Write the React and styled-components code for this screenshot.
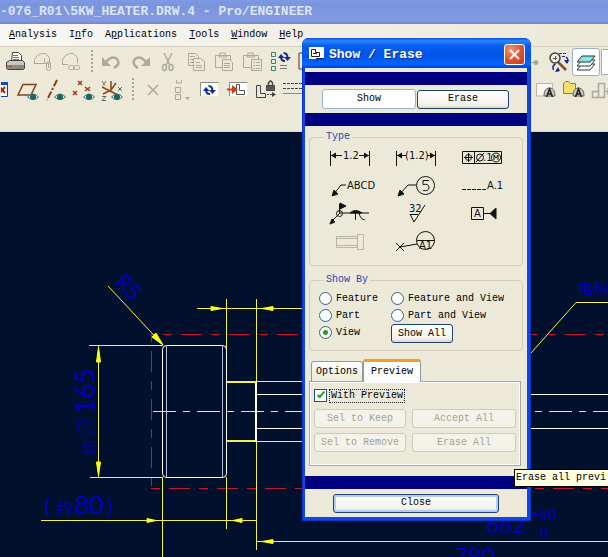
import React, { useState } from "react";
import styled, { createGlobalStyle, css } from "styled-components";

const GlobalStyle = createGlobalStyle`
  *, *::before, *::after { box-sizing: border-box; }
  html, body { margin: 0; overflow: hidden; }
  body, button, input, legend {
    font-family: "Liberation Mono", "Noto Sans CJK SC", monospace;
    font-size: 10px;
    line-height: 12px;
    color: #000;
  }
  button { padding: 0; }
`;

const Window = styled.main`
  position: relative;
  display: flex;
  flex-direction: column;
  height: 100vh;
  overflow: hidden;
  background: #ece9d8;
`;

const TitleBar = styled.header`
  height: 24px;
  display: flex;
  align-items: center;
  background: linear-gradient(#7d9be4, #7b94dd 20%, #829adf 85%, #7384d6);
`;

const WindowTitle = styled.h1`
  margin: 0;
  color: #dce6fa;
  font-size: 13px;
  line-height: 20px;
  font-weight: bold;
  white-space: nowrap;
`;

const MenuBar = styled.nav`
  display: flex;
  align-items: center;
  gap: 12px;
  height: 23px;
  padding-left: 9px;
  background: linear-gradient(90deg, #f8f7f3, #ece9d8);
  border-bottom: 1px solid #d5d1c2;
`;

const MenuItem = styled.button`
  border: 0;
  background: none;
`;

const Toolbars = styled.div`
  flex: none;
  height: 85px;
  padding-top: 1px;
  overflow: hidden;
  border-bottom: 1px solid #d5d5d0;
`;

const ToolRow = styled.div`
  display: flex;
  height: 28px;
`;

const ToolGroup = styled.div`
  display: flex;
  flex: none;
  width: ${(p) => (p.$lead ? "530px" : "auto")};
  padding-left: 1px;
  overflow: hidden;
`;

const ToolButton = styled.button`
  flex: none;
  display: flex;
  justify-content: ${(p) => (p.$clip ? "flex-end" : "center")};
  align-items: center;
  width: ${(p) => (p.$clip ? "13px" : "28px")};
  height: 28px;
  border: 0;
  background: none;
  overflow: hidden;
  ${(p) => p.$on && css`
    background: #fff;
    border: 1px solid #98b0d0;
    border-radius: 3px;
  `}
`;

const Glyph = styled.svg`
  flex: none;
  width: 28px;
  height: 28px;
  fill: none;
`;

const Grip = styled.span`
  flex: none;
  width: 13px;
  height: 24px;
  margin-top: 2px;
  background: repeating-linear-gradient(#a8a598 0 2px, transparent 2px 4px) 6px 0 / 2px 100% no-repeat;
`;

const Canvas = styled.section`
  flex: 1;
  min-height: 0;
  background: #00102d;
`;

const Sheet = styled.svg`
  display: block;
  width: 100%;
  height: 100%;
  fill: none;
  stroke-width: 1px;

  text {
    fill: #0000c4;
    font-family: Lato, "Noto Sans CJK SC", sans-serif;
    font-weight: 400;
  }
`;

const Dialog = styled.section`
  position: absolute;
  top: 38px;
  left: 302px;
  width: 229px;
  padding: 0 4px 4px 3px;
  border-radius: 7px 7px 0 0;
  background: #0a48e8;
  box-shadow: inset 1px 0 #0a35c8, inset -1px -1px #0a35c8;
`;

const DialogHeader = styled.header`
  display: flex;
  align-items: center;
  height: 30px;
  margin: 0 -4px 0 -3px;
  padding: 3px 6px 0 7px;
  border-radius: 7px 7px 0 0;
  background: linear-gradient(#0a50d8, #2b86ff 10%, #0a5cf0 25%, #0055e8 60%, #0664ff 88%, #0043c8);
`;

const DialogTitle = styled.h2`
  flex: 1;
  margin: 0 0 0 5px;
  color: #fff;
  font-size: 13px;
  line-height: 20px;
  font-weight: bold;
  text-shadow: 1px 1px #0a2f90;
`;

const AppIcon = styled.svg`
  width: 15px;
  height: 15px;
`;

const CloseBox = styled.button`
  display: grid;
  place-items: center;
  width: 21px;
  height: 21px;
  border: 1px solid #fff;
  border-radius: 3px;
  background: radial-gradient(circle at 30% 25%, #f0947a, #e05030 55%, #c83a18);
`;

const DialogBody = styled.div`
  padding-top: 4px;
  background: #ece9d8;
`;

const Stripe = styled.div`
  height: 13px;
  background: #000080;
`;

const PushButton = styled.button`
  height: ${(p) => (p.$active ? "20px" : "19px")};
  border: 1px solid #1c4270;
  border-radius: 3px;
  background: linear-gradient(#fff, #f3f2ea 80%, #dcd6c8);
  ${(p) => p.$active && css`
    background: #fff;
    border-color: #98b0d8;
  `}
  ${(p) => p.$default && css`
    box-shadow: inset 0 0 0 2px #b5cdf5;
  `}
  &:disabled {
    color: #a5a292;
    border-color: #cdcabc;
    background: #f4f3ea;
  }
`;

const ModeRow = styled.div`
  display: grid;
  grid-template-columns: 94px 92px;
  gap: 1px;
  align-items: center;
  height: 28px;
  padding-left: 17px;
`;

const Content = styled.div`
  padding: 5px 4px 10px;
`;

const Group = styled.fieldset`
  min-width: 0;
  margin: 0 0 8px;
  padding: ${(p) => (p.$tight ? "4px 9px 9px" : "1px 7px 9px")};
  border: 1px solid #d2cfbf;
  border-radius: 4px;
`;

const Legend = styled.legend`
  margin-left: ${(p) => (p.$tight ? "5px" : "7px")};
  padding: 0 2px;
  color: #1c48b0;
`;

const TypeGrid = styled.div`
  display: grid;
  grid-template-columns: repeat(3, 66px);
  grid-auto-rows: 28px;
`;

const TypeButton = styled.button`
  border: 0;
  background: none;
`;

const TypeGlyph = styled.svg`
  display: block;
  width: 66px;
  height: 28px;
  fill: none;
  stroke: #111;

  text {
    fill: #111;
    stroke: none;
    font-family: "DejaVu Sans", sans-serif;
    font-size: 10px;
  }
`;

const RadioGrid = styled.div`
  display: grid;
  grid-template-columns: 72px 1fr;
  grid-auto-rows: 17px;
`;

const RadioLabel = styled.label`
  display: flex;
  align-items: center;
  gap: 4px;
  white-space: nowrap;
`;

const Radio = styled.input`
  appearance: none;
  flex: none;
  width: 13px;
  height: 13px;
  margin: 0;
  border: 1px solid #3d6288;
  border-radius: 50%;
  background: #fbfbf8;
  &:checked {
    background: radial-gradient(circle, #2a9c2a 0 2px, #f6f8f2 3px);
  }
`;

const ShowAll = styled(PushButton)`
  width: 62px;
`;

const Tabs = styled.div`
  display: flex;
  align-items: flex-end;
  height: 23px;
  margin: 0 0 -1px 2px;
`;

const Tab = styled.button`
  position: relative;
  width: ${(p) => (p.$active ? "58px" : "52px")};
  height: ${(p) => (p.$active ? "23px" : "20px")};
  margin-bottom: ${(p) => (p.$active ? "0" : "1px")};
  border: 1px solid #919b9c;
  border-bottom: 0;
  border-radius: 3px 3px 0 0;
  background: linear-gradient(#fff, #ece9d8);
  ${(p) => p.$active && css`
    border-top: 3px solid #f0a020;
    background: #fcfcfa;
  `}
`;

const TabPanel = styled.div`
  width: 212px;
  height: 85px;
  padding: 7px 4px 0;
  border: 1px solid #a3a9ab;
  box-shadow: inset -1px -1px #fff, inset 1px 1px #fff;
`;

const CheckLabel = styled.label`
  display: flex;
  align-items: center;
  gap: 2px;
  height: 13px;
`;

const CheckText = styled.span`
  padding: 0 1px;
  border: 1px dotted #222;
`;

const Check = styled.input`
  appearance: none;
  width: 13px;
  height: 13px;
  margin: 0;
  border: 1px solid #1c5180;
  background: #fff;
  &:checked::after {
    content: "";
    display: block;
    width: 4px;
    height: 8px;
    margin: 0 0 0 4px;
    border: solid #21a121;
    border-width: 0 2px 2px 0;
    transform: rotate(42deg);
  }
`;

const ActionGrid = styled.div`
  display: grid;
  grid-template-columns: 92px 104px;
  gap: 5px 6px;
  padding-top: 7px;
`;

const Footer = styled.footer`
  display: flex;
  align-items: center;
  height: 28px;
  padding: 0 28px;
`;

const CloseButton = styled(PushButton)`
  flex: 1;
`;

const Tooltip = styled.div`
  position: absolute;
  top: 469px;
  left: 514px;
  min-width: 100px;
  padding: 2px 1px;
  border: 1px solid #000;
  background: #ffffe1;
  white-space: nowrap;
`;

const OFF = "#aba99c";
const BLUE = "#102c98";

const Eye = ({ x = 4, y = 1 }) => (
  <g transform={`translate(${x} ${y})`}>
    <path d="M9.500 20q5.500-6 11 0q-5.500 5-11 0" fill="#dfe8e0" stroke="#55746e" />
    <circle cx="15" cy="20" r="3" fill="#146860" />
  </g>
);

const Cycle = ({ x = 0, y = 0 }) => (
  <g transform={`translate(${x} ${y})`}>
    <path d="M3 5q0 4 4 4M9.500 6q0-5-4-5" stroke={BLUE} strokeWidth="2" />
    <path d="M0 6l3-4 3.500 4zM6 5h7l-3.500 4z" fill={BLUE} />
  </g>
);

const Stamp = ({ x = 0 }) => (
  <g transform={`translate(${x} 0)`}>
    <path d="M9 20q0-8 5.500-8t5.500 8z" fill="#c8c8c2" stroke="#666" />
    <path d="M11.500 21l3-8 3 8M12.500 18h4" stroke="#222" strokeWidth="1.500" />
  </g>
);

const icons = {
  print: (
    <g stroke="#444">
      <path d="M10.500 13.500l1-9h6l3 3v6" fill="#fff" />
      <path d="M12 7.500h5M12 9.500h6M12 11.500h6" stroke="#777" />
      <path d="M5.500 14.500l3-2h13l2 2v5h-18z" fill="#c8c6ba" />
      <path d="M6 17h17v4H6z" fill="#8c8a80" stroke="none" />
      <path d="M5.500 14.500v6l1 1h16l1-1v-6" />
      <path d="M8 18.500h3" stroke="#c33" />
    </g>
  ),
  attach: (
    <g stroke={OFF}>
      <path d="M5.500 15.500v-4l3-4 4-2h4l4 4v6h-5v-5M5 15.500h10" />
      <rect x="17.500" y="13.500" width="4" height="9" rx="2" />
      <path d="M19.500 16v4" />
    </g>
  ),
  link: (
    <g stroke={OFF}>
      <path d="M5.500 16.500v-5l3-4 4-2h4l4 4v6M5 16.500h6" />
      <rect x="11.500" y="17.500" width="6" height="4" rx="2" />
      <rect x="16.500" y="17.500" width="6" height="4" rx="2" />
    </g>
  ),
  undo: <g><path d="M8 14q6-7 11-3 4 5-3 9" stroke={OFF} strokeWidth="2.500" /><path d="M4 9v9h9z" fill={OFF} /></g>,
  redo: <g><path d="M20 14q-6-7-11-3-4 5 3 9" stroke={OFF} strokeWidth="2.500" /><path d="M24 9v9h-9z" fill={OFF} /></g>,
  cut: (
    <g stroke={OFF} strokeWidth="1.500">
      <path d="M10 5l6 12M18 5l-6 12" />
      <ellipse cx="10.500" cy="19.500" rx="2" ry="3" />
      <ellipse cx="17" cy="19.500" rx="2" ry="3" />
    </g>
  ),
  copy: (
    <g stroke={OFF}>
      <path d="M6.500 5.500h7l3 3v9h-10zM8 8.500h5M8 11.500h6M8 14.500h6" />
      <path d="M11.500 10.500h7l4 3v9h-11zM14 14.500h4M14 17.500h6M14 19.500h6" fill="#ece9d8" />
    </g>
  ),
  paste: (
    <g stroke={OFF}>
      <path d="M5.500 7.500h15v12h-15zM9 9l1-4h5l2 4z" />
      <path d="M12.500 11.500h7l3 3v8h-10zM14 15.500h6M14 17.500h6M14 19.500h6" fill="#ece9d8" />
    </g>
  ),
  pasteSpecial: (
    <g stroke={OFF}>
      <path d="M5.500 7.500h15v12h-15zM9 9l1-4h5l2 4z" />
      <path d="M13.500 11.500h10v11h-10z" fill="#ece9d8" />
      <path d="M15 14.500h2M15 17.500h2M15 20.500h2M18 14.500h4M18 17.500h4M18 20.500h4" />
    </g>
  ),
  regen: (
    <g>
      <path d="M5.500 4.500h4v4h-4zM5.500 11.500h4v4h-4zM5.500 18.500h4v4h-4z" fill="#d8f0e8" stroke="#3c8078" />
      <Cycle x={12} y={4} />
      <path d="M14 17.500h7M14 20.500h7" stroke="#777" />
    </g>
  ),
  find: <path d="M5 5h10v16H5z" stroke="#722" />,
  dot: <g><path d="M12 14.500h9" stroke={OFF} /><circle cx="20" cy="14.500" r="2.500" fill={OFF} /></g>,
  zoomView: (
    <g>
      <path d="M14 14l8 8" stroke="#80502c" strokeWidth="2.500" />
      <circle cx="11" cy="10" r="5" stroke="#444" strokeWidth="1.500" fill="#efeede" />
      <path d="M9 10.500h4M11.500 8v4" stroke="#555" />
      <path d="M15 5.500h8M18 8.500h4" stroke={BLUE} strokeDasharray="3 1" />
      <path d="M22 9q3 2 1 6M9.500 22q-2-4 2-6M12 22.500h3" stroke={BLUE} strokeWidth="1.500" />
      <path d="M20 12h5l-2 4zM11 24l5-1-2-4z" fill={BLUE} />
    </g>
  ),
  layers: (
    <g stroke="#333">
      <path d="M5 22h13l5-6H10z" fill="#fff" />
      <path d="M5 18h13l5-6H10z" fill="#fff" />
      <path d="M5 14h13l5-6H10z" fill="#84e6e8" />
    </g>
  ),
  panel: <path d="M1.500 1.500h26v25h-26z" fill="#fff" stroke="#98b0d0" />,
  boxX: (
    <g>
      <path d="M6.500 6.500h15v14h-15z" fill="#fff" stroke="#203a98" />
      <path d="M6 7.500h16" stroke="#1845c0" strokeWidth="3" />
      <path d="M14 11l5 6M19 11l-5 6" stroke="#922" strokeWidth="2" />
    </g>
  ),
  plane: <g><path d="M9 8.500h13L17 19H4z" stroke="#883f18" strokeWidth="1.500" /><Eye /></g>,
  axis: <g><path d="M15 4L5 24" stroke="#883f18" strokeWidth="2" strokeDasharray="7 2 2 2" /><Eye x={3} /></g>,
  points: (
    <g>
      <path d="M8 5l4 4M12 5l-4 4M3 15l4 4M7 15l-4 4M15 11l5 4M20 11l-5 4" stroke="#98401a" strokeWidth="1.500" />
      <Eye />
    </g>
  ),
  csys: (
    <g>
      <path d="M13 5v9L5 18M4 11l16 8M13 14l5-7" stroke="#98401a" strokeWidth="1.500" />
      <path d="M4 5l2 3 2-3M6 8v2M20 11l4 4M24 11l-4 4M4 20.500h4l-4 4h4" stroke="#666" />
      <Eye />
    </g>
  ),
  remove: <path d="M9 9l10 10M19 9L9 19" stroke={OFF} strokeWidth="1.500" />,
  order: (
    <g stroke={OFF}>
      <path d="M9.500 4v3h5V4M8.500 11.500h5v5h-5zM8.500 18.500h5v5h-5z" />
      <path d="M18 21h5l-2.500 3z" fill={OFF} stroke="none" />
    </g>
  ),
  refresh: <g><path d="M5.500 20V6.500h18" stroke="#8e8c80" /><path d="M6 7h17v13H6z" fill="#fff" /><Cycle x={8} y={9} /></g>,
  swap: (
    <g>
      <path d="M6.500 20V6.500h18" stroke="#8e8c80" />
      <path d="M7 7h17v13H7z" fill="#fff" />
      <path d="M13.500 8.500h3v6h5v4h-8z" stroke="#555" />
      <path d="M4 13.500h6" stroke="#d53a1c" strokeWidth="2" />
      <path d="M9 9l6 4.500-6 4.500z" fill="#d53a1c" />
    </g>
  ),
  lock: (
    <g stroke="#444">
      <path d="M5.500 9.500h4v8h5v4h-9z" />
      <path d="M15.500 9.500h8v5h-8z" fill="#555" />
      <path d="M17.500 9V7q2-4 4 0v2" strokeWidth="1.500" />
      <path d="M16 18.500h6" strokeDasharray="2 1" />
      <path d="M21 16l4 2.500-4 2.500z" fill="#444" stroke="none" />
    </g>
  ),
  lines: (
    <g stroke="#444">
      <path d="M4 7.500h22M4 12.500h22" strokeDasharray="3 1" />
      <path d="M4 17.500h22" stroke="#888" />
    </g>
  ),
  stampPage: <g><path d="M5.500 20V7.500h16V20z" fill="#f8f8f0" stroke="#b9b7ab" /><Stamp x={4} /></g>,
  stampFolder: <g><path d="M4.500 17.500v-10l2-2h3l2 2h5v10z" fill="#f7df70" stroke="#8e8042" /><Stamp x={5} /></g>,
  align: <path d="M5.500 15.500h6v6h-6zM11.500 7.500h6v14h-6zM18 15.500h8M21 12v7" stroke={OFF} strokeWidth="1.500" />,
};

const Tool = ({ name, ...rest }) => (
  <ToolButton type="button" aria-label={name} {...rest}>
    <Glyph viewBox="0 0 28 28">{icons[name]}</Glyph>
  </ToolButton>
);

const menus = [["", "A", "nalysis"], ["I", "n", "fo"], ["A", "p", "plications"], ["", "T", "ools"], ["", "W", "indow"], ["", "H", "elp"]];

const typeIcons = [
  ["Dimension", <g><path d="M13.500 7v15M52.500 7v15M14 11.500h11M42 11.500h10" /><path d="M14 11.500l5-3v6zM52 11.500l-5-3v6z" fill="#111" stroke="none" /><text x="26" y="15">1.2</text></g>],
  ["Reference dimension", <g><path d="M13.500 7v15M52.500 7v15M14 11.500h9M44 11.500h8" /><path d="M14 11.500l5-3v6zM52 11.500l-5-3v6z" fill="#111" stroke="none" /><text x="22" y="15">(1.2)</text></g>],
  ["Geometric tolerance", <g><path d="M13.500 7.500h39v12h-39zM25.500 7.500v12M15 13.500h9M19.500 9v9" /><circle cx="19.500" cy="13.500" r="3" /><circle cx="31" cy="13.500" r="3.500" /><path d="M27 18l8-9" /><text x="34" y="17">.1</text><circle cx="47" cy="13.500" r="4.500" /><path d="M45 16v-5l2 3 2-3v5" /></g>],
  ["Note", <g><path d="M17 22l7-9h5" /><path d="M15 24l2-6 4 4z" fill="#111" /><text x="30" y="17">ABCD</text></g>],
  ["Balloon", <g><path d="M17 22l8-9h8" /><path d="M15 24l2-6 4 4z" fill="#111" /><circle cx="42.500" cy="13.500" r="9" /><path d="M46 8.500h-6v4q6-1 6 3t-6 3" /></g>],
  ["Axis", <g><path d="M13 17.500h24" strokeDasharray="4 1" /><text x="38" y="17">A.1</text></g>],
  ["Weld symbol", <g><path d="M14 22l9-9h29M22.500 14V4M38.500 13v7M42 13q1 6 6 7" /><path d="M23 3l6 3-6 3zM33 13q5-5 12 0zM13 24l2-5 3 3z" fill="#111" /><circle cx="22.500" cy="13.500" r="3" /></g>],
  ["Surface finish", <g><text x="26" y="12">32</text><path d="M27 14l4 8 11-17M27 14.500h8" /></g>],
  ["Datum", <g><path d="M22.500 7.500h12v12h-12zM35 13.500h7" /><text x="25" y="17">A</text><path d="M47 8v11l-6-5.500z" fill="#111" /></g>],
  ["Cosmetic feature", <path d="M19.500 8.500h21v11h-21zM19 10.500h21M19 17.500h21M40.500 6.500h6v15h-6z" stroke="#b8b6a8" />],
  ["Datum target", <g><path d="M13 15l8 8M21 15l-8 8M17 19l17-3M34 12.500h18" /><circle cx="42.500" cy="12.500" r="9" /><text x="36" y="21">A1</text></g>],
];

const Drawing = () => (
  <Sheet aria-label="Heater drawing">
    <g transform="translate(0 -132)">
      <g stroke="#c5162c" shapeRendering="crispEdges">
        <path d="M151 334.500H2400" strokeDasharray="21 9 9 9" strokeDashoffset="18" />
        <path d="M151 488.500H2400" strokeDasharray="21 9 9 9" strokeDashoffset="30" />
        <path d="M151.500 334V488" strokeDasharray="21 9 9 9" strokeDashoffset="31" />
      </g>
      <g stroke="#f4f050" shapeRendering="crispEdges">
        <path d="M89 345.500h74M98.500 345v132M90 477.500h73M162.500 477V2400" />
        <path d="M226.500 299v83M256.500 299v83M197 308.500h120M226.500 477v52M256.500 441v109" />
        <path d="M41 520.500h215M256 541.500H2400M256 381.500h60M256 441.500h60" />
        <path d="M226 382h31M226 441h31" strokeWidth="2" />
        <path d="M153 411.500H2400" strokeDasharray="23 7 7 7" />
      </g>
      <path d="M108 286l55 59M531 353l45-50.500H2400" stroke="#f4f050" />
      <path
        d="M163 345l-11-8 4-4zM98.500 347l-2 15h4zM98.500 476l-2-14h4zM222 308.500l-11-2v4zM262 308.500l11-2v4zM156 520.500l-9-2v4zM233 520.500l9-2v4zM262 541.500l11-2v4z"
        fill="#ffff12"
        stroke="#ffff12"
      />
      <g stroke="#fff">
        <rect x="162.500" y="345.500" width="64" height="132" rx="4" />
        <path d="M226.500 382v59M257 394.500H2400M257 428.500H2400" />
        <path d="M256 382v59" strokeWidth="2" />
        <path d="M166.500 346v131M222.500 346v131" stroke="#b9bddc" />
      </g>
      <text fontSize="22" transform="translate(114 283) rotate(45)">R5</text>
      <g transform="translate(95 455) rotate(-90)">
        <text fontSize="15">约</text>
        <circle cx="27" cy="-9" r="8" stroke="#0000c4" />
        <path d="M19 2l16-21" stroke="#0000c4" />
        <text fontSize="26" x="41">165</text>
      </g>
      <text fontSize="21" y="514">
        <tspan x="45">(</tspan>
        <tspan x="57" fontSize="16">约</tspan>
        <tspan x="75" fontSize="25">80</tspan>
        <tspan x="107">)</tspan>
      </text>
      <text fontSize="15" x="578" y="294">电热</text>
      <text fontSize="23" x="486" y="533">662</text>
      <text fontSize="14" x="532" y="519">+80</text>
      <text fontSize="14" x="540" y="537">0</text>
      <text fontSize="23" x="455" y="565">780</text>
    </g>
  </Sheet>
);

export default function App() {
  const [mode, setMode] = useState("Show");
  const [tab, setTab] = useState("Preview");
  return (
    <Window>
      <GlobalStyle />
      <TitleBar><WindowTitle>-076_R01\5KW_HEATER.DRW.4 - Pro/ENGINEER</WindowTitle></TitleBar>
      <MenuBar>
        {menus.map(([a, key, b]) => (
          <MenuItem key={key + b} type="button">{a}<u>{key}</u>{b}</MenuItem>
        ))}
      </MenuBar>
      <Toolbars>
        <ToolRow>
          <ToolGroup $lead>
            {["print", "attach", "link"].map((n) => <Tool key={n} name={n} />)}
            <Grip />
            {["undo", "redo", "cut", "copy", "paste", "pasteSpecial", "regen", "find"].map((n) => <Tool key={n} name={n} />)}
          </ToolGroup>
          <ToolGroup>
            <Tool name="dot" $clip />
            <Tool name="zoomView" />
            <Tool name="layers" $on />
            <Tool name="panel" />
          </ToolGroup>
        </ToolRow>
        <ToolRow>
          <ToolGroup $lead>
            <Tool name="boxX" $clip />
            {["plane", "axis", "points", "csys"].map((n) => <Tool key={n} name={n} />)}
            <Grip />
            {["remove", "order", "refresh", "swap", "lock", "lines"].map((n) => <Tool key={n} name={n} />)}
          </ToolGroup>
          <ToolGroup>
            {["stampPage", "stampFolder", "align"].map((n) => <Tool key={n} name={n} />)}
          </ToolGroup>
        </ToolRow>
      </Toolbars>
      <Canvas><Drawing /></Canvas>

      <Dialog role="dialog" aria-labelledby="dialog-title">
        <DialogHeader>
          <AppIcon viewBox="0 0 15 15" fill="none">
            <path d="M0 0h15v12H0z" fill="#fff" />
            <path d="M2.500 2.500h4v3h4v4h-8zM4 6.500h4" stroke="#222" />
            <path d="M7 11.500h8M8.500 11v3M12.500 11v2" stroke="#062c90" />
          </AppIcon>
          <DialogTitle id="dialog-title">Show / Erase</DialogTitle>
          <CloseBox type="button" aria-label="Close dialog">
            <svg width="13" height="13" viewBox="0 0 13 13" stroke="#fff" strokeWidth="2"><path d="M2 2l9 9M11 2l-9 9" /></svg>
          </CloseBox>
        </DialogHeader>
        <DialogBody>
          <Stripe />
          <ModeRow>
            {["Show", "Erase"].map((m) => (
              <PushButton key={m} type="button" $active={mode === m} onClick={() => setMode(m)}>{m}</PushButton>
            ))}
          </ModeRow>
          <Stripe />
          <Content>
            <Group>
              <Legend>Type</Legend>
              <TypeGrid>
                {typeIcons.map(([label, art]) => (
                  <TypeButton key={label} type="button" aria-label={label}>
                    <TypeGlyph viewBox="0 0 66 28">{art}</TypeGlyph>
                  </TypeButton>
                ))}
              </TypeGrid>
            </Group>
            <Group $tight>
              <Legend $tight>Show By</Legend>
              <RadioGrid>
                {["Feature", "Feature and View", "Part", "Part and View", "View"].map((r) => (
                  <RadioLabel key={r}>
                    <Radio type="radio" name="show-by" defaultChecked={r === "View"} />{r}
                  </RadioLabel>
                ))}
                <ShowAll type="button">Show All</ShowAll>
              </RadioGrid>
            </Group>
            <Tabs role="tablist">
              {["Options", "Preview"].map((t) => (
                <Tab key={t} type="button" role="tab" aria-selected={tab === t} $active={tab === t} onClick={() => setTab(t)}>{t}</Tab>
              ))}
            </Tabs>
            <TabPanel role="tabpanel">
              <CheckLabel><Check type="checkbox" defaultChecked /><CheckText>With Preview</CheckText></CheckLabel>
              <ActionGrid>
                {["Sel to Keep", "Accept All", "Sel to Remove", "Erase All"].map((a) => (
                  <PushButton key={a} type="button" disabled>{a}</PushButton>
                ))}
              </ActionGrid>
            </TabPanel>
          </Content>
          <Stripe />
          <Footer><CloseButton type="button" $default>Close</CloseButton></Footer>
        </DialogBody>
      </Dialog>
      <Tooltip role="tooltip">Erase all previ</Tooltip>
    </Window>
  );
}
